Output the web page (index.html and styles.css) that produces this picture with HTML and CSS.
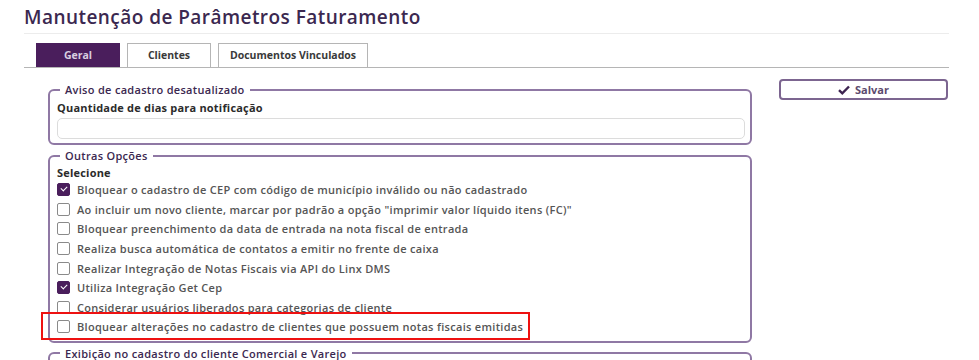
FILE: index.html
```html
<!DOCTYPE html>
<html lang="pt-BR">
<head>
    <meta charset="UTF-8">
    <title>Manutenção de Parâmetros Faturamento</title>
    <link rel="stylesheet" href="styles.css">
</head>
<body>
    <div class="page">
        <h1 class="title">Manutenção de Parâmetros Faturamento</h1>

        <div class="tabs">
            <span class="tab active">Geral</span>
            <span class="tab">Clientes</span>
            <span class="tab">Documentos Vinculados</span>
        </div>

        <div class="content">
            <div class="main">
                <fieldset class="group">
                    <legend>Aviso de cadastro desatualizado</legend>
                    <label class="field-label" for="dias">Quantidade de dias para notificação</label>
                    <input class="field" type="text" id="dias">
                </fieldset>

                <fieldset class="group">
                    <legend>Outras Opções</legend>
                    <div class="field-label">Selecione</div>
                    <label class="check"><span class="box checked"></span>Bloquear o cadastro de CEP com código de município inválido ou não cadastrado</label>
                    <label class="check"><span class="box"></span>Ao incluir um novo cliente, marcar por padrão a opção "imprimir valor líquido itens (FC)"</label>
                    <label class="check"><span class="box"></span>Bloquear preenchimento da data de entrada na nota fiscal de entrada</label>
                    <label class="check"><span class="box"></span>Realiza busca automática de contatos a emitir no frente de caixa</label>
                    <label class="check"><span class="box"></span>Realizar Integração de Notas Fiscais via API do Linx DMS</label>
                    <label class="check"><span class="box checked"></span>Utiliza Integração Get Cep</label>
                    <label class="check"><span class="box"></span>Considerar usuários liberados para categorias de cliente</label>
                    <label class="check highlight"><span class="box"></span>Bloquear alterações no cadastro de clientes que possuem notas fiscais emitidas</label>
                </fieldset>

                <fieldset class="group">
                    <legend>Exibição no cadastro do cliente Comercial e Varejo</legend>
                </fieldset>
            </div>

            <div class="side">
                <button class="btn-save">
                    <svg width="12" height="10" viewBox="0 0 12 10"><path d="M1 5.2 L4.3 8.3 L11 1.5" fill="none" stroke="#3d2350" stroke-width="2.4"/></svg>
                    Salvar
                </button>
            </div>
        </div>
    </div>
</body>
</html>
```

FILE: styles.css
```css
body {
    margin: 0;
    font-family: "Open Sans", "Liberation Sans", sans-serif;
    background: #fff;
    overflow: hidden;
}
.page {
    padding: 0 30px 0 24px;
}
.title {
    margin: 0;
    padding: 4px 0 3px;
    font-size: 19px;
    font-weight: 600;
    color: #3b2850;
    border-bottom: 1px solid #ececec;
    letter-spacing: 0.45px;
}
.tabs {
    display: flex;
    gap: 7px;
    margin-top: 9px;
    padding-left: 12px;
    border-bottom: 1px solid #b5b5b5;
}
.tab {
    height: 23px;
    line-height: 23px;
    text-align: center;
    font-size: 10.5px;
    font-weight: 700;
    color: #3a3a3a;
    border: 1px solid #b5b5b5;
    border-bottom: none;
    background: #fff;
    width: 82px;
}
.tab:last-child {
    width: 148px;
}
.tab.active {
    background: #4a1e5c;
    border-color: #4a1e5c;
    color: #d9cfe0;
}
.content {
    display: grid;
    grid-template-columns: 704px 169px;
    gap: 27px;
    padding-left: 24px;
}
.group {
    margin: 14px 0 0;
    padding: 0 5px 4px 7px;
    border: 2px solid #8f78a4;
    border-radius: 6px;
}
.group + .group {
    margin-top: 3px;
}
.group legend {
    margin-left: 3px;
    padding: 0 5px;
    font-size: 11px;
    font-weight: 600;
    color: #3b2850;
    letter-spacing: 0.3px;
}
.field-label {
    display: block;
    margin: 3px 0 3px;
    font-size: 11px;
    font-weight: 700;
    color: #2b2b2b;
    letter-spacing: 0.2px;
}
div.field-label {
    margin: 2px 0 0;
}
.field {
    display: block;
    box-sizing: border-box;
    width: 100%;
    height: 21px;
    border: 1px solid #dcdcdc;
    border-radius: 5px;
}
.check {
    display: flex;
    align-items: center;
    gap: 7px;
    height: 19.6px;
    font-size: 11px;
    font-weight: 600;
    color: #555;
    letter-spacing: 0.3px;
}
.box {
    box-sizing: border-box;
    width: 13px;
    height: 13px;
    border: 1px solid #8a8a8a;
    border-radius: 2px;
    position: relative;
}
.box.checked {
    background: #4a1e5c;
    border-color: #4a1e5c;
}
.box.checked::after {
    content: "";
    position: absolute;
    left: 3px;
    top: 2px;
    width: 5px;
    height: 3px;
    border-left: 1.5px solid #fff;
    border-bottom: 1.5px solid #fff;
    transform: rotate(-45deg);
}
.check.highlight {
    position: relative;
}
.check.highlight::before {
    content: "";
    position: absolute;
    left: -16px;
    top: -5px;
    width: 485px;
    height: 24px;
    border: 2.5px solid #ee1111;
}
.btn-save {
    margin-top: 11px;
    width: 169px;
    height: 21px;
    display: flex;
    align-items: center;
    justify-content: center;
    gap: 5px;
    background: #fff;
    border: 2px solid #7c6590;
    border-radius: 4px;
    font-family: inherit;
    font-size: 11px;
    font-weight: 700;
    color: #5c4a6e;
    padding: 0;
}
```
